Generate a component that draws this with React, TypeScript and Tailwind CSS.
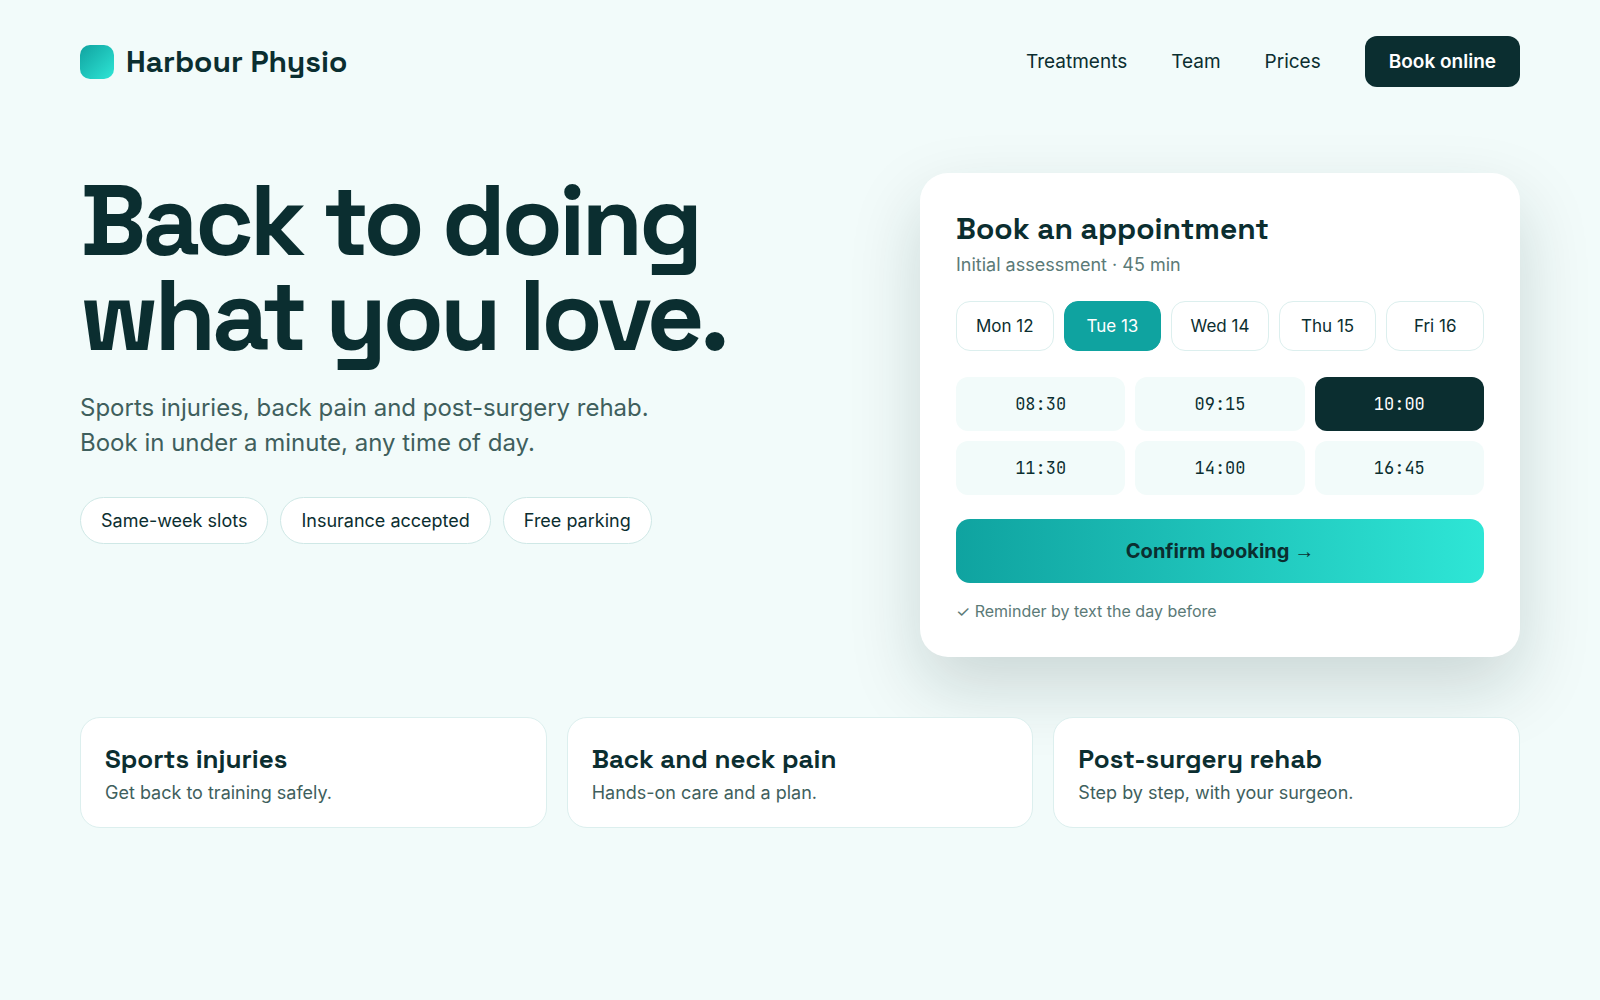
import { useState } from 'react'

const links = ['Treatments', 'Team', 'Prices']
const perks = ['Same-week slots', 'Insurance accepted', 'Free parking']
const days = ['Mon 12', 'Tue 13', 'Wed 14', 'Thu 15', 'Fri 16']
const times = ['08:30', '09:15', '10:00', '11:30', '14:00', '16:45']
const services = [
  { title: 'Sports injuries', text: 'Get back to training safely.' },
  { title: 'Back and neck pain', text: 'Hands-on care and a plan.' },
  { title: 'Post-surgery rehab', text: 'Step by step, with your surgeon.' },
]

function Header() {
  return (
    <header className="flex items-center justify-between">
      <a href="#" className="flex items-center gap-3 font-['Space_Grotesk','Inter',sans-serif] text-[30px] font-bold">
        <span className="size-[34px] rounded-[10px] bg-linear-135 from-[#0fa3a0] to-[#2ee6d6]" />
        Harbour Physio
      </a>
      <nav className="flex items-center gap-11 text-[19px] leading-7">
        {links.map((l) => (
          <a key={l} href="#">{l}</a>
        ))}
        <button className="rounded-xl bg-[#0b2e30] px-6 pt-3 pb-[11px] font-semibold text-white">Book online</button>
      </nav>
    </header>
  )
}

function Booking() {
  const [day, setDay] = useState('Tue 13')
  const [time, setTime] = useState('10:00')

  return (
    <section className="w-full max-w-[600px] rounded-[28px] bg-white p-9 shadow-[0_30px_70px_rgba(11,40,40,0.17)]">
      <h2 className="font-['Space_Grotesk','Inter',sans-serif] text-[30px] leading-10 font-bold">Book an appointment</h2>
      <p className="text-lg leading-8 text-[#5b7a77]">Initial assessment · 45 min</p>
      <div className="mt-5 grid grid-cols-5 gap-[10px]">
        {days.map((d) => (
          <button
            key={d}
            onClick={() => setDay(d)}
            aria-pressed={d === day}
            className={`rounded-[14px] border py-3 text-[17px] leading-6 ${d === day ? 'border-[#0fa3a0] bg-[#0fa3a0] text-white' : 'border-[#dcefee]'}`}
          >
            {d}
          </button>
        ))}
      </div>
      <div className="mt-[26px] grid grid-cols-3 gap-[10px]">
        {times.map((t) => (
          <button
            key={t}
            onClick={() => setTime(t)}
            aria-pressed={t === time}
            className={`rounded-xl py-[15px] font-['JetBrains_Mono','Liberation_Mono',monospace] text-[17px] leading-6 ${t === time ? 'bg-[#0b2e30] text-white' : 'bg-[#f2fbfa]'}`}
          >
            {t}
          </button>
        ))}
      </div>
      <button className="mt-6 h-16 w-full rounded-[14px] bg-linear-to-r from-[#0fa3a0] to-[#2ee6d6] text-xl font-bold">
        Confirm booking <span className="font-['Liberation_Sans',sans-serif]">→</span>
      </button>
      <p className="mt-[18px] text-base leading-5 text-[#5b7a77]">✓ Reminder by text the day before</p>
    </section>
  )
}

export default function App() {
  return (
    <div className="min-h-screen bg-[#f2fbfa] px-20 py-9 font-['Inter',sans-serif] text-[#0b2e30]">
      <Header />
      <main>
        <div className="mt-[86px] flex items-start justify-between gap-10">
          <div className="shrink-0">
            <h1 className="font-['Space_Grotesk','Inter',sans-serif] text-[100px] leading-[95px] font-semibold tracking-[-4px]">
              Back to doing<br />what you love.
            </h1>
            <p className="mt-[27px] text-2xl leading-[35px] text-[#3f5f5d]">
              Sports injuries, back pain and post-surgery rehab.<br />Book in under a minute, any time of day.
            </p>
            <ul className="mt-[37px] flex gap-3">
              {perks.map((p) => (
                <li key={p} className="rounded-full border border-[#cfe8e6] bg-white px-5 py-[9px] text-lg leading-[27px]">{p}</li>
              ))}
            </ul>
          </div>
          <Booking />
        </div>
        <div className="mt-[60px] grid grid-cols-3 gap-5">
          {services.map((s) => (
            <article key={s.title} className="rounded-[20px] border border-[#dcefee] bg-white px-6 pt-[22px] pb-5">
              <h3 className="font-['Space_Grotesk','Inter',sans-serif] text-[26px] leading-[39px] font-bold">{s.title}</h3>
              <p className="text-lg leading-7 text-[#3f5f5d]">{s.text}</p>
            </article>
          ))}
        </div>
      </main>
    </div>
  )
}
